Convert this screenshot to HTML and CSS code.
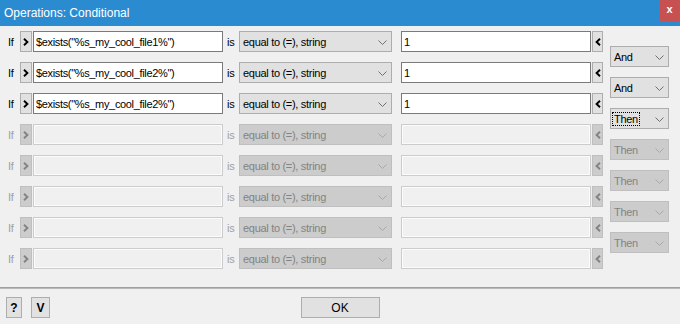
FILE: index.html
```html
<!DOCTYPE html>
<html lang="en">
<head>
    <meta charset="UTF-8">
    <title>Operations: Conditional</title>
    <link rel="stylesheet" href="styles.css">
</head>
<body>
<div class="window">
    <div class="titlebar">
        <span class="title">Operations: Conditional</span>
        <span class="close">x</span>
    </div>

    <div class="main">
        <div class="rows">
            <div class="row">
                <span class="lbl">If</span>
                <span class="btn arrow"><svg width="6" height="8" viewBox="0 0 6 8"><path d="M1 0.8 L4.4 4 L1 7.2" fill="none" stroke="currentColor" stroke-width="1.9"/></svg></span>
                <input class="field left" type="text" value='$exists("%s_my_cool_file1%")'>
                <span class="lbl is">is</span>
                <div class="select op"><span>equal to (=), string</span><svg width="9" height="5" viewBox="0 0 9 5"><path d="M0.5 0.5 L4.5 4.5 L8.5 0.5" fill="none" stroke="#707070"/></svg></div>
                <input class="field right" type="text" value="1">
                <span class="btn arrow back"><svg width="6" height="8" viewBox="0 0 6 8"><path d="M5 0.8 L1.6 4 L5 7.2" fill="none" stroke="currentColor" stroke-width="1.9"/></svg></span>
            </div>
            <div class="row">
                <span class="lbl">If</span>
                <span class="btn arrow"><svg width="6" height="8" viewBox="0 0 6 8"><path d="M1 0.8 L4.4 4 L1 7.2" fill="none" stroke="currentColor" stroke-width="1.9"/></svg></span>
                <input class="field left" type="text" value='$exists("%s_my_cool_file2%")'>
                <span class="lbl is">is</span>
                <div class="select op"><span>equal to (=), string</span><svg width="9" height="5" viewBox="0 0 9 5"><path d="M0.5 0.5 L4.5 4.5 L8.5 0.5" fill="none" stroke="#707070"/></svg></div>
                <input class="field right" type="text" value="1">
                <span class="btn arrow back"><svg width="6" height="8" viewBox="0 0 6 8"><path d="M5 0.8 L1.6 4 L5 7.2" fill="none" stroke="currentColor" stroke-width="1.9"/></svg></span>
            </div>
            <div class="row">
                <span class="lbl">If</span>
                <span class="btn arrow"><svg width="6" height="8" viewBox="0 0 6 8"><path d="M1 0.8 L4.4 4 L1 7.2" fill="none" stroke="currentColor" stroke-width="1.9"/></svg></span>
                <input class="field left" type="text" value='$exists("%s_my_cool_file2%")'>
                <span class="lbl is">is</span>
                <div class="select op"><span>equal to (=), string</span><svg width="9" height="5" viewBox="0 0 9 5"><path d="M0.5 0.5 L4.5 4.5 L8.5 0.5" fill="none" stroke="#707070"/></svg></div>
                <input class="field right" type="text" value="1">
                <span class="btn arrow back"><svg width="6" height="8" viewBox="0 0 6 8"><path d="M5 0.8 L1.6 4 L5 7.2" fill="none" stroke="currentColor" stroke-width="1.9"/></svg></span>
            </div>
            <div class="row off">
                <span class="lbl">If</span>
                <span class="btn arrow"><svg width="6" height="8" viewBox="0 0 6 8"><path d="M1 0.8 L4.4 4 L1 7.2" fill="none" stroke="currentColor" stroke-width="1.9"/></svg></span>
                <input class="field left" type="text" disabled>
                <span class="lbl is">is</span>
                <div class="select op"><span>equal to (=), string</span><svg width="9" height="5" viewBox="0 0 9 5"><path d="M0.5 0.5 L4.5 4.5 L8.5 0.5" fill="none" stroke="#a8a8a8"/></svg></div>
                <input class="field right" type="text" disabled>
                <span class="btn arrow back"><svg width="6" height="8" viewBox="0 0 6 8"><path d="M5 0.8 L1.6 4 L5 7.2" fill="none" stroke="currentColor" stroke-width="1.9"/></svg></span>
            </div>
            <div class="row off">
                <span class="lbl">If</span>
                <span class="btn arrow"><svg width="6" height="8" viewBox="0 0 6 8"><path d="M1 0.8 L4.4 4 L1 7.2" fill="none" stroke="currentColor" stroke-width="1.9"/></svg></span>
                <input class="field left" type="text" disabled>
                <span class="lbl is">is</span>
                <div class="select op"><span>equal to (=), string</span><svg width="9" height="5" viewBox="0 0 9 5"><path d="M0.5 0.5 L4.5 4.5 L8.5 0.5" fill="none" stroke="#a8a8a8"/></svg></div>
                <input class="field right" type="text" disabled>
                <span class="btn arrow back"><svg width="6" height="8" viewBox="0 0 6 8"><path d="M5 0.8 L1.6 4 L5 7.2" fill="none" stroke="currentColor" stroke-width="1.9"/></svg></span>
            </div>
            <div class="row off">
                <span class="lbl">If</span>
                <span class="btn arrow"><svg width="6" height="8" viewBox="0 0 6 8"><path d="M1 0.8 L4.4 4 L1 7.2" fill="none" stroke="currentColor" stroke-width="1.9"/></svg></span>
                <input class="field left" type="text" disabled>
                <span class="lbl is">is</span>
                <div class="select op"><span>equal to (=), string</span><svg width="9" height="5" viewBox="0 0 9 5"><path d="M0.5 0.5 L4.5 4.5 L8.5 0.5" fill="none" stroke="#a8a8a8"/></svg></div>
                <input class="field right" type="text" disabled>
                <span class="btn arrow back"><svg width="6" height="8" viewBox="0 0 6 8"><path d="M5 0.8 L1.6 4 L5 7.2" fill="none" stroke="currentColor" stroke-width="1.9"/></svg></span>
            </div>
            <div class="row off">
                <span class="lbl">If</span>
                <span class="btn arrow"><svg width="6" height="8" viewBox="0 0 6 8"><path d="M1 0.8 L4.4 4 L1 7.2" fill="none" stroke="currentColor" stroke-width="1.9"/></svg></span>
                <input class="field left" type="text" disabled>
                <span class="lbl is">is</span>
                <div class="select op"><span>equal to (=), string</span><svg width="9" height="5" viewBox="0 0 9 5"><path d="M0.5 0.5 L4.5 4.5 L8.5 0.5" fill="none" stroke="#a8a8a8"/></svg></div>
                <input class="field right" type="text" disabled>
                <span class="btn arrow back"><svg width="6" height="8" viewBox="0 0 6 8"><path d="M5 0.8 L1.6 4 L5 7.2" fill="none" stroke="currentColor" stroke-width="1.9"/></svg></span>
            </div>
            <div class="row off">
                <span class="lbl">If</span>
                <span class="btn arrow"><svg width="6" height="8" viewBox="0 0 6 8"><path d="M1 0.8 L4.4 4 L1 7.2" fill="none" stroke="currentColor" stroke-width="1.9"/></svg></span>
                <input class="field left" type="text" disabled>
                <span class="lbl is">is</span>
                <div class="select op"><span>equal to (=), string</span><svg width="9" height="5" viewBox="0 0 9 5"><path d="M0.5 0.5 L4.5 4.5 L8.5 0.5" fill="none" stroke="#a8a8a8"/></svg></div>
                <input class="field right" type="text" disabled>
                <span class="btn arrow back"><svg width="6" height="8" viewBox="0 0 6 8"><path d="M5 0.8 L1.6 4 L5 7.2" fill="none" stroke="currentColor" stroke-width="1.9"/></svg></span>
            </div>
        </div>

        <div class="links">
            <div class="select link"><span>And</span><svg width="9" height="5" viewBox="0 0 9 5"><path d="M0.5 0.5 L4.5 4.5 L8.5 0.5" fill="none" stroke="#707070"/></svg></div>
            <div class="select link"><span>And</span><svg width="9" height="5" viewBox="0 0 9 5"><path d="M0.5 0.5 L4.5 4.5 L8.5 0.5" fill="none" stroke="#707070"/></svg></div>
            <div class="select link"><span class="focus">Then</span><svg width="9" height="5" viewBox="0 0 9 5"><path d="M0.5 0.5 L4.5 4.5 L8.5 0.5" fill="none" stroke="#707070"/></svg></div>
            <div class="select link off"><span>Then</span><svg width="9" height="5" viewBox="0 0 9 5"><path d="M0.5 0.5 L4.5 4.5 L8.5 0.5" fill="none" stroke="#a8a8a8"/></svg></div>
            <div class="select link off"><span>Then</span><svg width="9" height="5" viewBox="0 0 9 5"><path d="M0.5 0.5 L4.5 4.5 L8.5 0.5" fill="none" stroke="#a8a8a8"/></svg></div>
            <div class="select link off"><span>Then</span><svg width="9" height="5" viewBox="0 0 9 5"><path d="M0.5 0.5 L4.5 4.5 L8.5 0.5" fill="none" stroke="#a8a8a8"/></svg></div>
            <div class="select link off"><span>Then</span><svg width="9" height="5" viewBox="0 0 9 5"><path d="M0.5 0.5 L4.5 4.5 L8.5 0.5" fill="none" stroke="#a8a8a8"/></svg></div>
        </div>
    </div>

    <div class="separator"></div>

    <div class="footer">
        <div class="tools">
            <span class="btn small help">?</span>
            <span class="btn small view">V</span>
        </div>
        <span class="btn ok">OK</span>
        <div></div>
    </div>
</div>
</body>
</html>
```

FILE: styles.css
```css
body{
    margin: 0;
    background-color: #f0f0f0;
    font-family: "Liberation Sans", Arial, sans-serif;
    font-size: 11px;
    color: #000;
}
.window{
    width: 680px;
    height: 324px;
    overflow: hidden;
}
.titlebar{
    height: 26px;
    background-color: #2b8bd1;
    display: flex;
    align-items: flex-start;
    justify-content: space-between;
}
.title{
    color: white;
    font-size: 12px;
    line-height: 26px;
    padding-left: 4px;
}
.close{
    width: 19px;
    height: 21px;
    margin-right: 1px;
    background-color: #c75050;
    color: white;
    font-weight: bold;
    font-size: 11px;
    line-height: 19px;
    text-align: center;
}

.main{
    display: flex;
    padding-top: 5px;
}
.rows{
    display: flex;
    flex-direction: column;
    gap: 10px;
}
.row{
    display: flex;
    height: 21px;
    align-items: center;
}
.lbl{
    box-sizing: border-box;
    width: 20px;
    padding-left: 8px;
    letter-spacing: -0.3px;
}
.lbl.is{
    width: 16px;
    padding-left: 4px;
}
.btn{
    box-sizing: border-box;
    display: flex;
    align-items: center;
    justify-content: center;
    background-color: #e1e1e1;
    border: 1px solid #adadad;
    height: 21px;
}
.arrow{
    width: 12px;
    color: #000;
}
.arrow.back{
    width: 11px;
    margin-left: 1px;
}
.field{
    box-sizing: border-box;
    width: 190px;
    height: 21px;
    margin: 0 0 0 1px;
    padding: 0 2px;
    border: 1px solid #7a7a7a;
    background: white;
    font-family: "Liberation Sans", Arial, sans-serif;
    font-size: 11px;
    letter-spacing: -0.34px;
    color: #000;
    outline: none;
}
.field.right{
    margin-left: 9px;
}
.select{
    box-sizing: border-box;
    display: flex;
    align-items: center;
    justify-content: space-between;
    height: 21px;
    padding: 0 4px 0 3px;
    background-color: #e1e1e1;
    border: 1px solid #adadad;
    letter-spacing: -0.3px;
}
.select svg{
    margin-top: 1px;
}
.op{
    width: 153px;
}

/* disabled rows */
.off .lbl{
    color: #a0a0a0;
}
.off .btn{
    background-color: #cccccc;
    border-color: #bfbfbf;
    color: #838383;
}
.off .field{
    background-color: #f0f0f0;
    border-color: #cccccc;
    box-shadow: inset 0 0 0 1px #fbfbfb;
}
.off .select, .select.off{
    background-color: #cccccc;
    border-color: #bfbfbf;
    color: #838383;
}

.links{
    display: flex;
    flex-direction: column;
    gap: 10px;
    padding-top: 15px;
    margin-left: 7px;
}
.link{
    width: 59px;
}
.focus{
    outline: 1px dotted #000;
    outline-offset: 0;
    padding: 0 1px;
    margin-left: -1px;
}

.separator{
    margin-top: 18px;
    height: 1px;
    background-color: #a0a0a0;
    border-bottom: 1px solid #b8b8b8;
}
.footer{
    display: grid;
    grid-template-columns: 1fr auto 1fr;
    padding-top: 8px;
}
.tools{
    display: flex;
    padding-left: 6px;
    gap: 9px;
}
.small{
    font-weight: bold;
    font-size: 12px;
}
.help{
    width: 16px;
}
.view{
    width: 19px;
}
.ok{
    width: 79px;
    font-size: 12px;
}
```
